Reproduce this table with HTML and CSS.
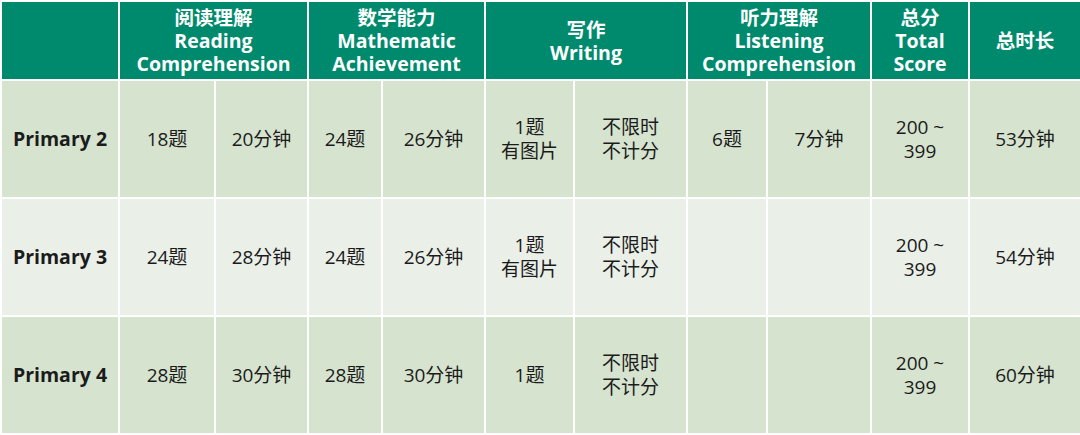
FILE: index.html
```html
<!DOCTYPE html>
<html lang="zh">
<head>
<meta charset="utf-8">
<link rel="stylesheet" href="styles.css">
</head>
<body>
<table class="exam">
  <colgroup>
    <col class="c-level">
    <col class="c-96"><col class="c-93">
    <col class="c-74"><col class="c-103">
    <col class="c-89"><col class="c-113">
    <col class="c-80"><col class="c-104">
    <col class="c-98"><col class="c-112">
  </colgroup>
  <thead>
    <tr class="head">
      <th></th>
      <th colspan="2">阅读理解<br>Reading<br>Comprehension</th>
      <th colspan="2">数学能力<br>Mathematic<br>Achievement</th>
      <th colspan="2">写作<br>Writing</th>
      <th colspan="2">听力理解<br>Listening<br>Comprehension</th>
      <th>总分<br>Total<br>Score</th>
      <th>总时长</th>
    </tr>
  </thead>
  <tbody>
    <tr class="row dark">
      <td class="level">Primary 2</td>
      <td>18题</td><td>20分钟</td>
      <td>24题</td><td>26分钟</td>
      <td>1题<br>有图片</td><td>不限时<br>不计分</td>
      <td>6题</td><td>7分钟</td>
      <td>200 ~<br>399</td><td>53分钟</td>
    </tr>
    <tr class="row light">
      <td class="level">Primary 3</td>
      <td>24题</td><td>28分钟</td>
      <td>24题</td><td>26分钟</td>
      <td>1题<br>有图片</td><td>不限时<br>不计分</td>
      <td></td><td></td>
      <td>200 ~<br>399</td><td>54分钟</td>
    </tr>
    <tr class="row dark">
      <td class="level">Primary 4</td>
      <td>28题</td><td>30分钟</td>
      <td>28题</td><td>30分钟</td>
      <td>1题</td><td>不限时<br>不计分</td>
      <td></td><td></td>
      <td>200 ~<br>399</td><td>60分钟</td>
    </tr>
  </tbody>
</table>
</body>
</html>
```

FILE: styles.css
```css
html, body {
  margin: 0;
  padding: 0;
  background: #ffffff;
}

.exam {
  width: 1080px;
  table-layout: fixed;
  border-collapse: collapse;
  font-family: "Open Sans", "Noto Sans CJK SC", sans-serif;
  color: #1b1b1b;
}

.c-level { width: 118px; }
.c-96 { width: 96px; }
.c-93 { width: 93px; }
.c-74 { width: 74px; }
.c-103 { width: 103px; }
.c-89 { width: 89px; }
.c-113 { width: 113px; }
.c-80 { width: 80px; }
.c-104 { width: 104px; }
.c-98 { width: 98px; }
.c-112 { width: 112px; }

.exam th,
.exam td {
  border: 2px solid #ffffff;
  padding: 0;
  text-align: center;
  vertical-align: middle;
}

.head th {
  height: 77px;
  background: #008a6d;
  color: #ffffff;
  font-size: 19.5px;
  font-weight: 700;
  line-height: 23px;
}

.row td {
  height: 116px;
  font-size: 19px;
  line-height: 24px;
}

.row.dark td { background: #d6e3cf; }
.row.light td { background: #eaefe8; }

.row td.level {
  font-size: 19.5px;
  font-weight: 700;
}
```
